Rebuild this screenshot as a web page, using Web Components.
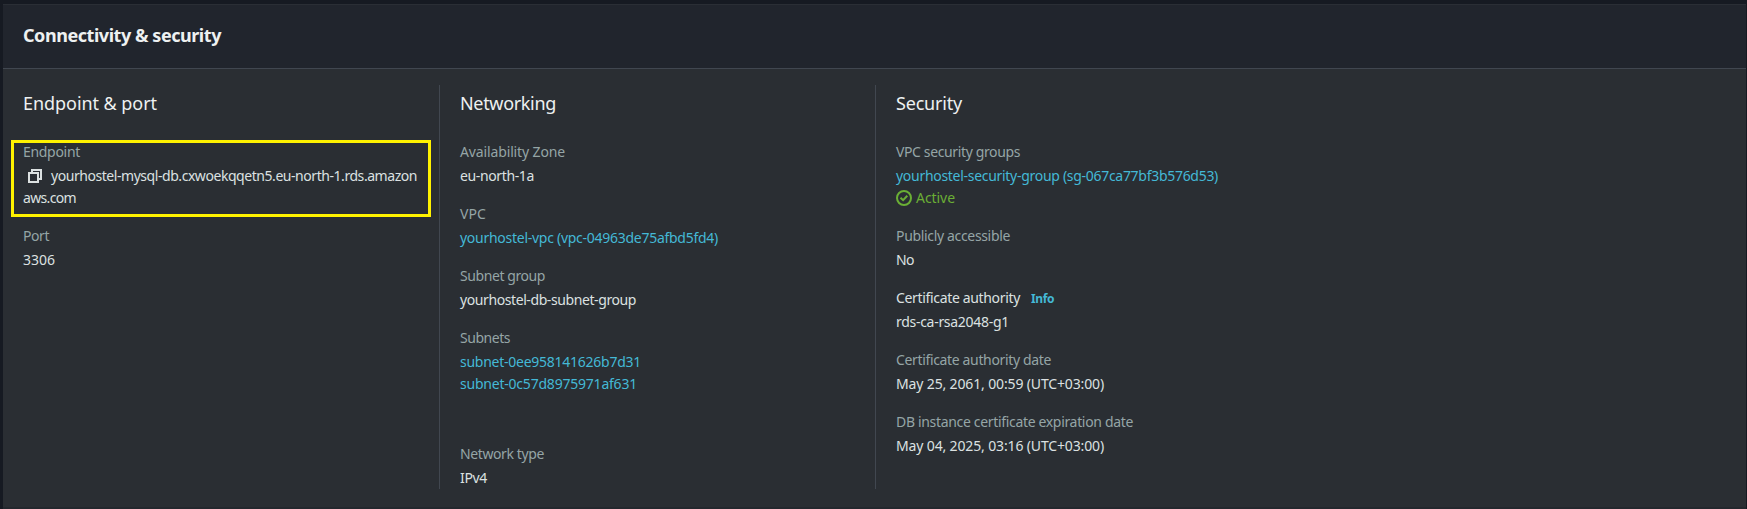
<!DOCTYPE html>
<html lang="en">
<head>
<meta charset="utf-8">
<title>Connectivity &amp; security</title>
<style>
html,body{margin:0;height:509px;overflow:hidden;background:#161a22}
body{font:14px/22px "Noto Sans","Open Sans",sans-serif;color:#dce1e1}
</style>
</head>
<body>
<rds-panel>
  <fit-text slot="title" width="198">Connectivity &amp; security</fit-text>
  <rds-column>
    <fit-text slot="title" width="134">Endpoint &amp; port</fit-text>
    <rds-field highlight>
      <fit-text slot="label" width="57">Endpoint</fit-text>
      <rds-line><copy-icon></copy-icon><fit-text width="366">yourhostel-mysql-db.cxwoekqqetn5.eu-north-1.rds.amazon</fit-text></rds-line>
      <rds-line><fit-text width="53">aws.com</fit-text></rds-line>
    </rds-field>
    <rds-field>
      <fit-text slot="label" width="26">Port</fit-text>
      <rds-line><fit-text width="32">3306</fit-text></rds-line>
    </rds-field>
  </rds-column>
  <rds-column divided>
    <fit-text slot="title" width="96">Networking</fit-text>
    <rds-field><fit-text slot="label" width="105">Availability Zone</fit-text><rds-line><fit-text width="74">eu-north-1a</fit-text></rds-line></rds-field>
    <rds-field><fit-text slot="label" width="26">VPC</fit-text><rds-line link><fit-text width="258">yourhostel-vpc (vpc-04963de75afbd5fd4)</fit-text></rds-line></rds-field>
    <rds-field><fit-text slot="label" width="85">Subnet group</fit-text><rds-line><fit-text width="176">yourhostel-db-subnet-group</fit-text></rds-line></rds-field>
    <rds-field spaced><fit-text slot="label" width="50">Subnets</fit-text><rds-line link><fit-text width="181">subnet-0ee958141626b7d31</fit-text></rds-line><rds-line link><fit-text width="177">subnet-0c57d8975971af631</fit-text></rds-line></rds-field>
    <rds-field><fit-text slot="label" width="84">Network type</fit-text><rds-line><fit-text width="27">IPv4</fit-text></rds-line></rds-field>
  </rds-column>
  <rds-column divided wide>
    <fit-text slot="title" width="66">Security</fit-text>
    <rds-field><fit-text slot="label" width="124">VPC security groups</fit-text><rds-line link><fit-text width="322">yourhostel-security-group (sg-067ca77bf3b576d53)</fit-text></rds-line><rds-line success><check-icon></check-icon><fit-text width="39">Active</fit-text></rds-line></rds-field>
    <rds-field><fit-text slot="label" width="114">Publicly accessible</fit-text><rds-line><fit-text width="18">No</fit-text></rds-line></rds-field>
    <rds-field strong><fit-text slot="label" width="124">Certificate authority</fit-text><info-link slot="label"><fit-text width="23">Info</fit-text></info-link><rds-line><fit-text width="113">rds-ca-rsa2048-g1</fit-text></rds-line></rds-field>
    <rds-field><fit-text slot="label" width="155">Certificate authority date</fit-text><rds-line><fit-text width="208">May 25, 2061, 00:59 (UTC+03:00)</fit-text></rds-line></rds-field>
    <rds-field><fit-text slot="label" width="237">DB instance certificate expiration date</fit-text><rds-line><fit-text width="208">May 04, 2025, 03:16 (UTC+03:00)</fit-text></rds-line></rds-field>
  </rds-column>
</rds-panel>
<script>
const define = (name, html, setup) => customElements.define(name, class extends HTMLElement {
  constructor() {
    super();
    this.attachShadow({mode: "open"}).innerHTML = html;
  }
  connectedCallback() { if (setup) setup(this); }
});

define("rds-panel", `<style>
:host{display:flex;flex-direction:column;box-sizing:border-box;height:509px;padding:4px 1px 0 3px}
header{flex:none;box-sizing:border-box;height:65px;padding:14px 20px 0;background:#21252d;border-top:1px solid #2a2e35;border-bottom:1px solid #414750;font-size:18px;line-height:32px;font-weight:700;color:#eef1f1}
main{flex:1;display:flex;background:#2a2e33;padding:16px 0 18px;border-bottom:2px solid #24282e}
</style><header><slot name="title"></slot></header><main><slot></slot></main>`);

define("rds-column", `<style>
:host{display:block;box-sizing:border-box;flex:none;width:436px;padding-left:20px}
:host([divided]){border-left:1px solid #414750}
:host([wide]){flex:1}
h3{margin:0 0 27px;font-weight:400;font-size:18px;line-height:22px;padding-top:7px;color:#eef1f1}
</style><h3><slot name="title"></slot></h3><slot></slot>`);

define("rds-field", `<style>
:host{display:block;position:relative;margin-bottom:16px}
:host([spaced]){margin-bottom:48px}
:host(:last-child){margin-bottom:0}
.label{display:flex;height:22px;margin-bottom:2px;color:#95a5a6}
:host([strong]) .label{color:#dce1e1}
:host([highlight])::after{content:"";position:absolute;left:-12px;top:-1px;width:414px;height:71px;border:3px solid #fff200}
</style><div class="label"><slot name="label"></slot></div><slot></slot>`);

define("rds-line", `<style>
:host{display:flex;height:22px;align-items:center}
:host([link]){color:#44b9d6}
:host([success]){color:#6aaf35}
</style><slot></slot>`);

define("info-link", `<style>
:host{display:block;margin-left:11px;color:#44b9d6;font-size:12px;line-height:23px;font-weight:700}
</style><slot></slot>`);

define("copy-icon", `<style>
:host{display:block;width:14px;height:14px;margin:0 9px 0 5px}svg{display:block}
</style><svg width="14" height="14" viewBox="0 0 14 14" fill="none" stroke="currentColor" stroke-width="2"><path d="M1 4h9v9H1zM4 4V1h9v9h-3"/></svg>`);

define("check-icon", `<style>
:host{display:block;width:16px;height:16px;margin-right:4px}svg{display:block}
</style><svg width="16" height="16" viewBox="0 0 16 16" fill="none" stroke="currentColor" stroke-width="2"><circle cx="8" cy="8" r="7"/><path d="M4.5 7.8l2.6 2.4 4.2-4.4"/></svg>`);

// Spreads its text over the given width by adjusting the tracking.
define("fit-text", `<style>
:host{display:block;width:max-content;white-space:nowrap;font-kerning:normal}
</style><slot></slot>`, el => {
  const target = +el.getAttribute("width");
  const range = document.createRange();
  range.selectNodeContents(el);
  const natural = range.getBoundingClientRect().width;
  el.style.letterSpacing = ((target - natural) / el.textContent.length).toFixed(3) + "px";
});
</script>
</body>
</html>
